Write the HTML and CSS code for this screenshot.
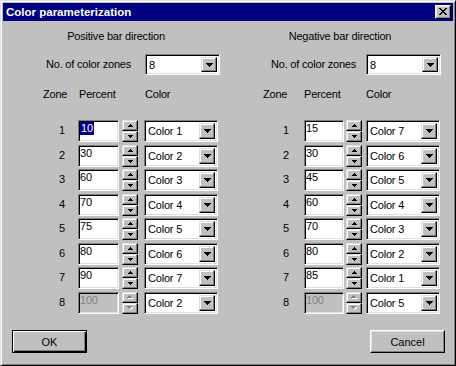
FILE: index.html
```html
<!DOCTYPE html>
<html>
<head>
    <meta charset="UTF-8">
    <title>Color parameterization</title>
    <link rel="stylesheet" href="styles.css">
</head>
<body>
    <div class="window">
        <div class="titlebar">
            <span class="title">Color parameterization</span>
            <span class="close-btn">
                <svg width="8" height="7" viewBox="0 0 8 7" shape-rendering="crispEdges">
                    <path d="M0 0h2v1h-2zM6 0h2v1h-2zM1 1h2v1h-2zM5 1h2v1h-2zM2 2h4v1h-4zM3 3h2v1h-2zM2 4h4v1h-4zM1 5h2v1h-2zM5 5h2v1h-2zM0 6h2v1h-2zM6 6h2v1h-2z" fill="#000"/>
                </svg>
            </span>
        </div>

        <div class="panes">
            <!-- Positive direction -->
            <div class="pane pane-pos">
                <div class="pane-title">Positive bar direction</div>
                <div class="zones">
                    <span class="zones-label">No. of color zones</span>
                    <div class="combo combo-zones">
                        <span class="combo-text">8</span>
                        <span class="combo-btn"><svg width="7" height="4" viewBox="0 0 7 4" shape-rendering="crispEdges"><path d="M0 0h7v1h-1v1h-1v1h-1v1h-1v-1h-1v-1h-1v-1h-1z" fill="#000"/></svg></span>
                    </div>
                </div>
                <div class="head">
                    <span class="h-zone">Zone</span>
                    <span class="h-pct">Percent</span>
                    <span class="h-color">Color</span>
                </div>
                <div class="rows">
                    <div class="row">
                        <span class="zone">1</span>
                        <span class="edit"><span class="selected">10</span></span>
                        <span class="spin"><span class="spin-btn"><svg width="5" height="3" viewBox="0 0 5 3" shape-rendering="crispEdges"><path d="M2 0h1v1h1v1h1v1H0V2h1V1h1z" fill="#000"/></svg></span><span class="spin-btn"><svg width="5" height="3" viewBox="0 0 5 3" shape-rendering="crispEdges"><path d="M0 0h5v1H4v1H3v1H2V2H1V1H0z" fill="#000"/></svg></span></span>
                        <span class="combo combo-color"><span class="combo-text">Color 1</span><span class="combo-btn"><svg width="7" height="4" viewBox="0 0 7 4" shape-rendering="crispEdges"><path d="M0 0h7v1h-1v1h-1v1h-1v1h-1v-1h-1v-1h-1v-1h-1z" fill="#000"/></svg></span></span>
                    </div>
                    <div class="row">
                        <span class="zone">2</span>
                        <span class="edit">30</span>
                        <span class="spin"><span class="spin-btn"><svg width="5" height="3" viewBox="0 0 5 3" shape-rendering="crispEdges"><path d="M2 0h1v1h1v1h1v1H0V2h1V1h1z" fill="#000"/></svg></span><span class="spin-btn"><svg width="5" height="3" viewBox="0 0 5 3" shape-rendering="crispEdges"><path d="M0 0h5v1H4v1H3v1H2V2H1V1H0z" fill="#000"/></svg></span></span>
                        <span class="combo combo-color"><span class="combo-text">Color 2</span><span class="combo-btn"><svg width="7" height="4" viewBox="0 0 7 4" shape-rendering="crispEdges"><path d="M0 0h7v1h-1v1h-1v1h-1v1h-1v-1h-1v-1h-1v-1h-1z" fill="#000"/></svg></span></span>
                    </div>
                    <div class="row">
                        <span class="zone">3</span>
                        <span class="edit">60</span>
                        <span class="spin"><span class="spin-btn"><svg width="5" height="3" viewBox="0 0 5 3" shape-rendering="crispEdges"><path d="M2 0h1v1h1v1h1v1H0V2h1V1h1z" fill="#000"/></svg></span><span class="spin-btn"><svg width="5" height="3" viewBox="0 0 5 3" shape-rendering="crispEdges"><path d="M0 0h5v1H4v1H3v1H2V2H1V1H0z" fill="#000"/></svg></span></span>
                        <span class="combo combo-color"><span class="combo-text">Color 3</span><span class="combo-btn"><svg width="7" height="4" viewBox="0 0 7 4" shape-rendering="crispEdges"><path d="M0 0h7v1h-1v1h-1v1h-1v1h-1v-1h-1v-1h-1v-1h-1z" fill="#000"/></svg></span></span>
                    </div>
                    <div class="row">
                        <span class="zone">4</span>
                        <span class="edit">70</span>
                        <span class="spin"><span class="spin-btn"><svg width="5" height="3" viewBox="0 0 5 3" shape-rendering="crispEdges"><path d="M2 0h1v1h1v1h1v1H0V2h1V1h1z" fill="#000"/></svg></span><span class="spin-btn"><svg width="5" height="3" viewBox="0 0 5 3" shape-rendering="crispEdges"><path d="M0 0h5v1H4v1H3v1H2V2H1V1H0z" fill="#000"/></svg></span></span>
                        <span class="combo combo-color"><span class="combo-text">Color 4</span><span class="combo-btn"><svg width="7" height="4" viewBox="0 0 7 4" shape-rendering="crispEdges"><path d="M0 0h7v1h-1v1h-1v1h-1v1h-1v-1h-1v-1h-1v-1h-1z" fill="#000"/></svg></span></span>
                    </div>
                    <div class="row">
                        <span class="zone">5</span>
                        <span class="edit">75</span>
                        <span class="spin"><span class="spin-btn"><svg width="5" height="3" viewBox="0 0 5 3" shape-rendering="crispEdges"><path d="M2 0h1v1h1v1h1v1H0V2h1V1h1z" fill="#000"/></svg></span><span class="spin-btn"><svg width="5" height="3" viewBox="0 0 5 3" shape-rendering="crispEdges"><path d="M0 0h5v1H4v1H3v1H2V2H1V1H0z" fill="#000"/></svg></span></span>
                        <span class="combo combo-color"><span class="combo-text">Color 5</span><span class="combo-btn"><svg width="7" height="4" viewBox="0 0 7 4" shape-rendering="crispEdges"><path d="M0 0h7v1h-1v1h-1v1h-1v1h-1v-1h-1v-1h-1v-1h-1z" fill="#000"/></svg></span></span>
                    </div>
                    <div class="row">
                        <span class="zone">6</span>
                        <span class="edit">80</span>
                        <span class="spin"><span class="spin-btn"><svg width="5" height="3" viewBox="0 0 5 3" shape-rendering="crispEdges"><path d="M2 0h1v1h1v1h1v1H0V2h1V1h1z" fill="#000"/></svg></span><span class="spin-btn"><svg width="5" height="3" viewBox="0 0 5 3" shape-rendering="crispEdges"><path d="M0 0h5v1H4v1H3v1H2V2H1V1H0z" fill="#000"/></svg></span></span>
                        <span class="combo combo-color"><span class="combo-text">Color 6</span><span class="combo-btn"><svg width="7" height="4" viewBox="0 0 7 4" shape-rendering="crispEdges"><path d="M0 0h7v1h-1v1h-1v1h-1v1h-1v-1h-1v-1h-1v-1h-1z" fill="#000"/></svg></span></span>
                    </div>
                    <div class="row">
                        <span class="zone">7</span>
                        <span class="edit">90</span>
                        <span class="spin"><span class="spin-btn"><svg width="5" height="3" viewBox="0 0 5 3" shape-rendering="crispEdges"><path d="M2 0h1v1h1v1h1v1H0V2h1V1h1z" fill="#000"/></svg></span><span class="spin-btn"><svg width="5" height="3" viewBox="0 0 5 3" shape-rendering="crispEdges"><path d="M0 0h5v1H4v1H3v1H2V2H1V1H0z" fill="#000"/></svg></span></span>
                        <span class="combo combo-color"><span class="combo-text">Color 7</span><span class="combo-btn"><svg width="7" height="4" viewBox="0 0 7 4" shape-rendering="crispEdges"><path d="M0 0h7v1h-1v1h-1v1h-1v1h-1v-1h-1v-1h-1v-1h-1z" fill="#000"/></svg></span></span>
                    </div>
                    <div class="row">
                        <span class="zone">8</span>
                        <span class="edit disabled">100</span>
                        <span class="spin disabled"><span class="spin-btn"><svg width="6" height="4" viewBox="0 0 6 4" shape-rendering="crispEdges"><path d="M3 1h1v1h1v1h1v1H1V3h1V2h1z" fill="#fff"/><path d="M2 0h1v1h1v1h1v1H0V2h1V1h1z" fill="#808080"/></svg></span><span class="spin-btn"><svg width="6" height="4" viewBox="0 0 6 4" shape-rendering="crispEdges"><path d="M1 1h5v1H5v1H4v1H3V3H2V2H1z" fill="#fff"/><path d="M0 0h5v1H4v1H3v1H2V2H1V1H0z" fill="#808080"/></svg></span></span>
                        <span class="combo combo-color"><span class="combo-text">Color 2</span><span class="combo-btn"><svg width="7" height="4" viewBox="0 0 7 4" shape-rendering="crispEdges"><path d="M0 0h7v1h-1v1h-1v1h-1v1h-1v-1h-1v-1h-1v-1h-1z" fill="#000"/></svg></span></span>
                    </div>
                </div>
            </div>

            <!-- Negative direction -->
            <div class="pane pane-neg">
                <div class="pane-title">Negative bar direction</div>
                <div class="zones">
                    <span class="zones-label">No. of color zones</span>
                    <div class="combo combo-zones">
                        <span class="combo-text">8</span>
                        <span class="combo-btn"><svg width="7" height="4" viewBox="0 0 7 4" shape-rendering="crispEdges"><path d="M0 0h7v1h-1v1h-1v1h-1v1h-1v-1h-1v-1h-1v-1h-1z" fill="#000"/></svg></span>
                    </div>
                </div>
                <div class="head">
                    <span class="h-zone">Zone</span>
                    <span class="h-pct">Percent</span>
                    <span class="h-color">Color</span>
                </div>
                <div class="rows">
                    <div class="row">
                        <span class="zone">1</span>
                        <span class="edit">15</span>
                        <span class="spin"><span class="spin-btn"><svg width="5" height="3" viewBox="0 0 5 3" shape-rendering="crispEdges"><path d="M2 0h1v1h1v1h1v1H0V2h1V1h1z" fill="#000"/></svg></span><span class="spin-btn"><svg width="5" height="3" viewBox="0 0 5 3" shape-rendering="crispEdges"><path d="M0 0h5v1H4v1H3v1H2V2H1V1H0z" fill="#000"/></svg></span></span>
                        <span class="combo combo-color"><span class="combo-text">Color 7</span><span class="combo-btn"><svg width="7" height="4" viewBox="0 0 7 4" shape-rendering="crispEdges"><path d="M0 0h7v1h-1v1h-1v1h-1v1h-1v-1h-1v-1h-1v-1h-1z" fill="#000"/></svg></span></span>
                    </div>
                    <div class="row">
                        <span class="zone">2</span>
                        <span class="edit">30</span>
                        <span class="spin"><span class="spin-btn"><svg width="5" height="3" viewBox="0 0 5 3" shape-rendering="crispEdges"><path d="M2 0h1v1h1v1h1v1H0V2h1V1h1z" fill="#000"/></svg></span><span class="spin-btn"><svg width="5" height="3" viewBox="0 0 5 3" shape-rendering="crispEdges"><path d="M0 0h5v1H4v1H3v1H2V2H1V1H0z" fill="#000"/></svg></span></span>
                        <span class="combo combo-color"><span class="combo-text">Color 6</span><span class="combo-btn"><svg width="7" height="4" viewBox="0 0 7 4" shape-rendering="crispEdges"><path d="M0 0h7v1h-1v1h-1v1h-1v1h-1v-1h-1v-1h-1v-1h-1z" fill="#000"/></svg></span></span>
                    </div>
                    <div class="row">
                        <span class="zone">3</span>
                        <span class="edit">45</span>
                        <span class="spin"><span class="spin-btn"><svg width="5" height="3" viewBox="0 0 5 3" shape-rendering="crispEdges"><path d="M2 0h1v1h1v1h1v1H0V2h1V1h1z" fill="#000"/></svg></span><span class="spin-btn"><svg width="5" height="3" viewBox="0 0 5 3" shape-rendering="crispEdges"><path d="M0 0h5v1H4v1H3v1H2V2H1V1H0z" fill="#000"/></svg></span></span>
                        <span class="combo combo-color"><span class="combo-text">Color 5</span><span class="combo-btn"><svg width="7" height="4" viewBox="0 0 7 4" shape-rendering="crispEdges"><path d="M0 0h7v1h-1v1h-1v1h-1v1h-1v-1h-1v-1h-1v-1h-1z" fill="#000"/></svg></span></span>
                    </div>
                    <div class="row">
                        <span class="zone">4</span>
                        <span class="edit">60</span>
                        <span class="spin"><span class="spin-btn"><svg width="5" height="3" viewBox="0 0 5 3" shape-rendering="crispEdges"><path d="M2 0h1v1h1v1h1v1H0V2h1V1h1z" fill="#000"/></svg></span><span class="spin-btn"><svg width="5" height="3" viewBox="0 0 5 3" shape-rendering="crispEdges"><path d="M0 0h5v1H4v1H3v1H2V2H1V1H0z" fill="#000"/></svg></span></span>
                        <span class="combo combo-color"><span class="combo-text">Color 4</span><span class="combo-btn"><svg width="7" height="4" viewBox="0 0 7 4" shape-rendering="crispEdges"><path d="M0 0h7v1h-1v1h-1v1h-1v1h-1v-1h-1v-1h-1v-1h-1z" fill="#000"/></svg></span></span>
                    </div>
                    <div class="row">
                        <span class="zone">5</span>
                        <span class="edit">70</span>
                        <span class="spin"><span class="spin-btn"><svg width="5" height="3" viewBox="0 0 5 3" shape-rendering="crispEdges"><path d="M2 0h1v1h1v1h1v1H0V2h1V1h1z" fill="#000"/></svg></span><span class="spin-btn"><svg width="5" height="3" viewBox="0 0 5 3" shape-rendering="crispEdges"><path d="M0 0h5v1H4v1H3v1H2V2H1V1H0z" fill="#000"/></svg></span></span>
                        <span class="combo combo-color"><span class="combo-text">Color 3</span><span class="combo-btn"><svg width="7" height="4" viewBox="0 0 7 4" shape-rendering="crispEdges"><path d="M0 0h7v1h-1v1h-1v1h-1v1h-1v-1h-1v-1h-1v-1h-1z" fill="#000"/></svg></span></span>
                    </div>
                    <div class="row">
                        <span class="zone">6</span>
                        <span class="edit">80</span>
                        <span class="spin"><span class="spin-btn"><svg width="5" height="3" viewBox="0 0 5 3" shape-rendering="crispEdges"><path d="M2 0h1v1h1v1h1v1H0V2h1V1h1z" fill="#000"/></svg></span><span class="spin-btn"><svg width="5" height="3" viewBox="0 0 5 3" shape-rendering="crispEdges"><path d="M0 0h5v1H4v1H3v1H2V2H1V1H0z" fill="#000"/></svg></span></span>
                        <span class="combo combo-color"><span class="combo-text">Color 2</span><span class="combo-btn"><svg width="7" height="4" viewBox="0 0 7 4" shape-rendering="crispEdges"><path d="M0 0h7v1h-1v1h-1v1h-1v1h-1v-1h-1v-1h-1v-1h-1z" fill="#000"/></svg></span></span>
                    </div>
                    <div class="row">
                        <span class="zone">7</span>
                        <span class="edit">85</span>
                        <span class="spin"><span class="spin-btn"><svg width="5" height="3" viewBox="0 0 5 3" shape-rendering="crispEdges"><path d="M2 0h1v1h1v1h1v1H0V2h1V1h1z" fill="#000"/></svg></span><span class="spin-btn"><svg width="5" height="3" viewBox="0 0 5 3" shape-rendering="crispEdges"><path d="M0 0h5v1H4v1H3v1H2V2H1V1H0z" fill="#000"/></svg></span></span>
                        <span class="combo combo-color"><span class="combo-text">Color 1</span><span class="combo-btn"><svg width="7" height="4" viewBox="0 0 7 4" shape-rendering="crispEdges"><path d="M0 0h7v1h-1v1h-1v1h-1v1h-1v-1h-1v-1h-1v-1h-1z" fill="#000"/></svg></span></span>
                    </div>
                    <div class="row">
                        <span class="zone">8</span>
                        <span class="edit disabled">100</span>
                        <span class="spin disabled"><span class="spin-btn"><svg width="6" height="4" viewBox="0 0 6 4" shape-rendering="crispEdges"><path d="M3 1h1v1h1v1h1v1H1V3h1V2h1z" fill="#fff"/><path d="M2 0h1v1h1v1h1v1H0V2h1V1h1z" fill="#808080"/></svg></span><span class="spin-btn"><svg width="6" height="4" viewBox="0 0 6 4" shape-rendering="crispEdges"><path d="M1 1h5v1H5v1H4v1H3V3H2V2H1z" fill="#fff"/><path d="M0 0h5v1H4v1H3v1H2V2H1V1H0z" fill="#808080"/></svg></span></span>
                        <span class="combo combo-color"><span class="combo-text">Color 5</span><span class="combo-btn"><svg width="7" height="4" viewBox="0 0 7 4" shape-rendering="crispEdges"><path d="M0 0h7v1h-1v1h-1v1h-1v1h-1v-1h-1v-1h-1v-1h-1z" fill="#000"/></svg></span></span>
                    </div>
                </div>
            </div>
        </div>

        <div class="footer">
            <span class="button default">OK</span>
            <span class="button">Cancel</span>
        </div>
    </div>
</body>
</html>
```

FILE: styles.css
```css
body {
    margin: 0;
    font-family: "Liberation Sans", Arial, sans-serif;
    font-size: 11px;
    color: #000;
    background-color: #c0c0c0;
}
.window {
    width: 456px;
    height: 366px;
    box-sizing: border-box;
    padding: 2px;
    background-color: #c0c0c0;
    border: 1px solid;
    border-color: #dfdfdf #000 #000 #dfdfdf;
    box-shadow: inset 1px 1px #fff, inset -1px -1px #808080;
}
.titlebar {
    height: 18px;
    display: flex;
    align-items: center;
    justify-content: space-between;
    padding: 0 2px 0 3px;
    background-color: #000080;
    color: #fff;
}
.title {
    font-weight: bold;
    font-size: 11.5px;
}
.close-btn {
    width: 16px;
    height: 14px;
    box-sizing: border-box;
    display: flex;
    align-items: center;
    justify-content: center;
    padding: 0 1px 1px 0;
    background-color: #c0c0c0;
    border: 1px solid;
    border-color: #fff #000 #000 #fff;
    box-shadow: inset -1px -1px #808080, inset 1px 1px #dfdfdf;
}

.panes {
    display: flex;
    padding-left: 1px;
}
.pane {
    width: 224px;
    padding-top: 9px;
    letter-spacing: -0.2px;
}
.pane-title {
    text-align: center;
    line-height: 13px;
}
.zones {
    display: flex;
    align-items: center;
    margin-top: 11px;
}
.zones-label {
    margin-left: 42px;
    width: 99px;
    padding-bottom: 2px;
}
.pane-neg .zones-label {
    margin-left: 43px;
    width: 95px;
}
.head {
    display: flex;
    margin-top: 13px;
    line-height: 13px;
}
.h-zone {
    margin-left: 39px;
    width: 36px;
}
.h-pct {
    width: 66px;
}
.pane-neg .h-zone {
    margin-left: 35px;
    width: 41px;
}
.pane-neg .h-pct {
    width: 62px;
}

.rows {
    margin-top: 19px;
}
.row {
    display: flex;
    align-items: flex-start;
    height: 22px;
    margin-bottom: 2.5px;
}
.zone {
    width: 61px;
    text-align: right;
    line-height: 21px;
}
.edit {
    width: 41px;
    height: 22px;
    margin-left: 13px;
    box-sizing: border-box;
    padding: 1px 0 0 1px;
    line-height: 13px;
    background-color: #fff;
    border: 1px solid;
    border-color: #808080 #fff #fff #808080;
    box-shadow: inset 1px 1px #000, inset -1px -1px #dfdfdf;
}
.edit .selected {
    display: inline-block;
    padding: 0 1px;
    background-color: #000080;
    color: #fff;
}
.edit.disabled {
    background-color: #c0c0c0;
    color: #808080;
}
.pane-neg .edit {
    width: 40px;
    margin-left: 15px;
}
.spin {
    display: flex;
    flex-direction: column;
    width: 16px;
    margin-left: 3px;
}
.pane-neg .spin {
    margin-left: 2px;
}
.spin-btn {
    height: 11px;
    box-sizing: border-box;
    display: flex;
    align-items: center;
    justify-content: center;
    background-color: #c0c0c0;
    border: 1px solid;
    border-color: #dfdfdf #000 #000 #dfdfdf;
    box-shadow: inset -1px -1px #808080, inset 1px 1px #fff;
}

.combo {
    display: flex;
    box-sizing: border-box;
    background-color: #fff;
    border: 1px solid;
    border-color: #808080 #fff #fff #808080;
    box-shadow: inset 1px 1px #000, inset -1px -1px #dfdfdf;
    padding: 2px;
}
.combo-zones {
    width: 75px;
    height: 21px;
}
.combo-color {
    width: 74px;
    height: 22px;
    margin-left: 6px;
}
.pane-neg .combo-color {
    margin-left: 4px;
}
.combo-text {
    flex: 1;
    padding-left: 1px;
    line-height: 17px;
}
.combo-btn {
    width: 16px;
    box-sizing: border-box;
    display: flex;
    align-items: center;
    justify-content: center;
    background-color: #c0c0c0;
    border: 1px solid;
    border-color: #dfdfdf #000 #000 #dfdfdf;
    box-shadow: inset -1px -1px #808080, inset 1px 1px #fff;
}

.footer {
    display: flex;
    justify-content: space-between;
    padding: 0 8px 0 9px;
    margin-top: 14px;
}
.button {
    width: 75px;
    height: 23px;
    box-sizing: border-box;
    display: flex;
    align-items: center;
    justify-content: center;
    border: 1px solid;
    border-color: #fff #000 #000 #fff;
    box-shadow: inset -1px -1px #808080, inset 1px 1px #dfdfdf;
}
.button.default {
    border-color: #000;
    box-shadow: inset 1px 1px #fff, inset -1px -1px #000, inset -2px -2px #808080;
}
```
